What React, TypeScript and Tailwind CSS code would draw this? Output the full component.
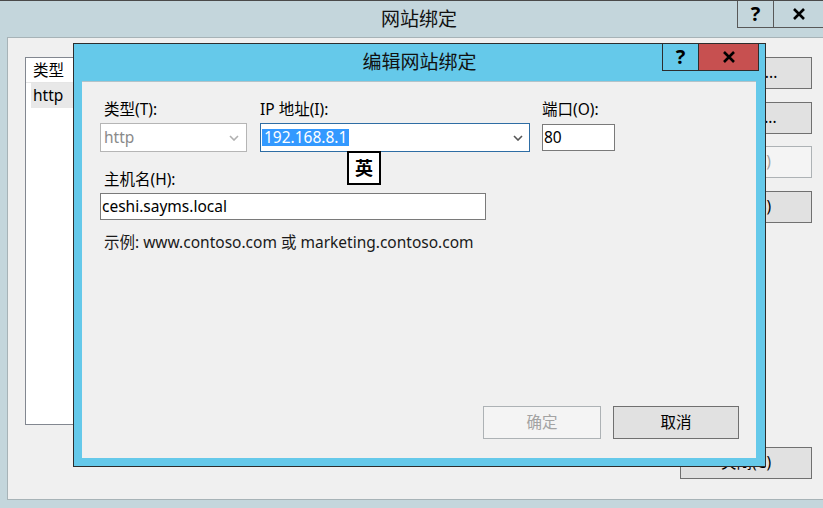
import React from "react";

const font = "font-['Noto_Sans','Noto_Sans_CJK_SC',sans-serif]";

const Chevron = ({ color }: { color: string }) => (
  <svg width="10" height="6" viewBox="0 0 10 6" className="shrink-0">
    <path d="M1 1 L5 5 L9 1" fill="none" stroke={color} strokeWidth="1.6" />
  </svg>
);

const CloseGlyph = () => (
  <svg width="14" height="12" viewBox="0 0 14 12">
    <path d="M2 1 L12 11 M12 1 L2 11" stroke="#000" strokeWidth="2.6" />
  </svg>
);

const SideButton = ({ label, disabled }: { label: string; disabled?: boolean }) => (
  <div
    className={
      "w-[132px] h-[32px] flex items-center justify-center border " +
      (disabled
        ? "bg-[#f4f4f4] border-[#adb2b5] text-[#a0a0a0]"
        : "bg-[#e1e1e1] border-[#707070] text-black")
    }
  >
    {label}
  </div>
);

export default function App() {
  return (
    <div
      className={
        "relative w-[823px] h-[508px] overflow-hidden bg-[#c4d6dc] border-t border-[#4a4a4a] text-[15.5px] text-black " +
        font
      }
    >
      {/* outer window title bar */}
      <div className="relative flex h-[36px]">
        <div className="pl-[381px] text-[19px] leading-[36px] text-[#111]">网站绑定</div>
        <div className="ml-auto flex h-[27px]">
          <div className="w-[37px] border-x border-b border-[#585858] flex items-center justify-center text-[20px] font-bold leading-none">
            ?
          </div>
          <div className="w-[49px] border-b border-[#585858] flex items-center justify-center">
            <CloseGlyph />
          </div>
        </div>
      </div>

      {/* outer window content */}
      <div className="ml-[7px] h-[463px] bg-[#f0f0f0] border-t border-l border-b border-[#a7b3b7] flex pt-[19px] pl-[17px] pr-[11px] pb-[20px]">
        <div className="w-[640px] h-[368px] bg-white border border-[#828790]">
          <div className="h-[25px] border-b border-[#e5e5e5] pl-[7px] leading-[24px]">类型</div>
          <div className="ml-[5px] h-[25px] bg-[#e8e8e8] pl-[2px] leading-[25px]">http</div>
        </div>
        <div className="ml-auto flex flex-col">
          <SideButton label="添加(A)..." />
          <div className="mt-[13px]">
            <SideButton label="编辑(E)..." />
          </div>
          <div className="mt-[12px]">
            <SideButton label="删除(R)" disabled />
          </div>
          <div className="mt-[13px]">
            <SideButton label="浏览(B)" />
          </div>
          <div className="mt-auto">
            <SideButton label="关闭(C)" />
          </div>
        </div>
      </div>

      {/* edit binding dialog */}
      <div className="absolute left-[73px] top-[42px] w-[693px] h-[424px] bg-[#65c9ea] border border-[#2d2d2d] flex flex-col">
        <div className="relative h-[37px] shrink-0">
          <div className="text-center text-[19px] leading-[36px] text-[#111]">编辑网站绑定</div>
          <div className="absolute -top-px right-[6px] flex h-[28px]">
            <div className="w-[37px] border border-[#2d2d2d] flex items-center justify-center text-[20px] font-bold leading-none">
              ?
            </div>
            <div className="w-[60px] bg-[#c75050] border-y border-r border-[#2d2d2d] flex items-center justify-center">
              <CloseGlyph />
            </div>
          </div>
        </div>

        <div className="ml-[8px] mr-[9px] mb-[8px] flex-1 bg-[#f0f0f0] border-t border-[#b3c3c9] flex flex-col pl-[18px] pt-[17px]">
          <div className="flex">
            <div className="w-[147px] flex flex-col">
              <div className="pl-[4px] h-[20px] leading-[20px]">类型(T):</div>
              <div className="mt-[4px] h-[29px] bg-white border border-[#b5b5b5] flex items-center pl-[3px] pr-[7px] text-[#8a8a8a]">
                <span className="flex-1">http</span>
                <Chevron color="#b0b0b0" />
              </div>
            </div>
            <div className="relative ml-[13px] w-[270px] flex flex-col">
              <div className="h-[20px] leading-[20px]">IP 地址(I):</div>
              <div className="mt-[4px] h-[29px] bg-white border border-[#2e6da4] flex items-center pl-[1px] pr-[6px]">
                <span className="flex-1">
                  <span className="bg-[#3399ff] text-white px-[2px] leading-[17px] inline-block">192.168.8.1</span>
                </span>
                <Chevron color="#555" />
              </div>
              <div className="absolute left-[87px] top-[52px] w-[34px] h-[34px] bg-white border-2 border-black flex items-center justify-center text-[18px] font-bold">
                英
              </div>
            </div>
            <div className="ml-[12px] w-[73px] flex flex-col">
              <div className="h-[20px] leading-[20px]">端口(O):</div>
              <div className="mt-[5px] h-[27px] bg-white border border-[#7a7a7a] flex items-center pl-[1px]">80</div>
            </div>
          </div>

          <div className="mt-[17px] pl-[4px] h-[20px] leading-[20px]">主机名(H):</div>
          <div className="mt-[4px] w-[386px] h-[27px] bg-white border border-[#7a7a7a] flex items-center pl-[1px]">
            ceshi.sayms.local
          </div>
          <div className="mt-[12px] pl-[4px] h-[20px] leading-[20px] text-[#1a1a1a]">
            示例: www.contoso.com 或 marketing.contoso.com
          </div>

          <div className="mt-auto flex justify-end gap-[12px] pr-[17px] pb-[19px]">
            <div className="w-[118px] h-[33px] bg-[#f4f4f4] border border-[#adb2b5] text-[#a3a3a3] flex items-center justify-center">
              确定
            </div>
            <div className="w-[126px] h-[33px] bg-[#e1e1e1] border border-[#707070] flex items-center justify-center">
              取消
            </div>
          </div>
        </div>
      </div>
    </div>
  );
}
